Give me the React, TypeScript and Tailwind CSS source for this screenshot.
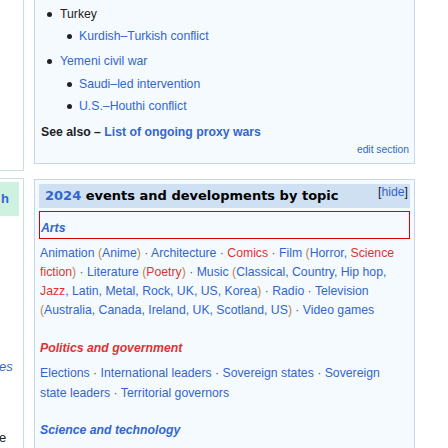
import React from "react";

type Kids = { children: React.ReactNode };

const B = ({ children }: Kids) => <span className="text-[#3366cc]">{children}</span>;
const R = ({ children }: Kids) => <span className="text-[#dd3333]">{children}</span>;
const P = ({ children }: Kids) => <span className="text-[#b5884c]">{children}</span>;
const Dot = () => <span className="text-[#54595d]"> · </span>;

function Item({ level, children }: { level: 1 | 2; children: React.ReactNode }) {
  return (
    <div className={level === 1 ? "flex items-center h-[20px] pl-[12px]" : "flex items-center h-[20px] pl-[32px]"}>
      <span className="w-[5px] h-[5px] rounded-full bg-[#202122] shrink-0" />
      <span className={level === 1 ? "ml-[8px]" : "ml-[7px]"}>{children}</span>
    </div>
  );
}

export default function App() {
  return (
    <div
      className="w-[448px] h-[448px] overflow-hidden bg-white flex text-[12.25px] text-[#202122]"
      style={{ fontFamily: '"Liberation Sans", Arial, sans-serif' }}
    >
      {/* left column, cut off */}
      <div className="w-[24px] shrink-0 flex flex-col">
        <div className="h-[171px] border-r border-b border-[#c8e0dc]" />
        <div className="mt-[7px] flex-1 border-t border-r border-[#c8e0dc] pt-[3px]">
          <div className="w-[19px] h-[34px] bg-[#cff1e0] flex items-center font-bold text-[#3366cc] text-[13px]">
            <span className="ml-[1px]">h</span>
          </div>
          <div className="mt-[141px] leading-[20px] italic text-[#3366cc] text-[13px] -ml-[1px]">es</div>
          <div className="mt-[51px] leading-[20px] text-[13px] -ml-[1px]">e</div>
        </div>
      </div>

      {/* main column */}
      <div className="ml-[10px] w-[381px] shrink-0 flex flex-col">
        <div className="h-[164px] border-l border-r border-b border-[#c5d7ec] bg-[#f5faff] pt-[4px]">
          <Item level={1}>Turkey</Item>
          <div className="mt-[2px]">
            <Item level={2}><B>Kurdish–Turkish conflict</B></Item>
          </div>
          <div className="mt-[5px]">
            <Item level={1}><B>Yemeni civil war</B></Item>
          </div>
          <div className="mt-[3px]">
            <Item level={2}><B>Saudi–led intervention</B></Item>
          </div>
          <div className="mt-[2px]">
            <Item level={2}><B>U.S.–Houthi conflict</B></Item>
          </div>
          <div className="mt-[6px] pl-[6px] leading-[20px] font-bold">
            See also – <B>List of ongoing proxy wars</B>
          </div>
          <div className="mt-[2px] pr-[5px] text-right text-[10.3px] leading-[12px] text-[#3366cc]">edit section</div>
        </div>

        <div className="mt-[15px] flex-1 border-t border-l border-r border-[#c5d7ec] bg-[#f5faff] px-[4px] pt-[4px]">
          <div className="h-[24px] bg-[#cee0f2] flex justify-between pl-[6px] pr-[2px]">
            <div
              className="font-bold text-[13px] leading-[24px] text-[#000]"
              style={{ fontFamily: '"DejaVu Sans", Verdana, sans-serif' }}
            >
              <span className="text-[#3366cc]">2024</span> events and developments by topic
            </div>
            <div className="text-[12.25px] leading-[16px]">
              [<B>hide</B>]
            </div>
          </div>

          <div className="mt-[3px] h-[28px] border border-[#dd0000] pl-[1px] pt-[6px] leading-[20px] italic font-bold text-[#3366cc]">
            Arts
          </div>

          <div className="mt-[5px] pl-[1px] leading-[19px]">
            <div>
              <B>Animation</B> <P>(</P><B>Anime</B><P>)</P><Dot /><B>Architecture</B><Dot /><R>Comics</R><Dot />
              <B>Film</B> <P>(</P><B>Horror, </B><R>Science</R>
            </div>
            <div>
              <R>fiction</R><P>)</P><Dot /><B>Literature</B> <P>(</P><R>Poetry</R><P>)</P><Dot /><B>Music</B>{" "}
              <P>(</P><B>Classical, Country, Hip hop,</B>
            </div>
            <div>
              <R>Jazz</R><B>, Latin, Metal, Rock, UK, US, Korea</B><P>)</P><Dot /><B>Radio</B><Dot /><B>Television</B>
            </div>
            <div>
              <P>(</P><B>Australia, Canada, Ireland, UK, Scotland, US</B><P>)</P><Dot /><B>Video games</B>
            </div>
          </div>

          <div className="mt-[18px] pl-[1px] leading-[20px] italic font-bold text-[#dd3333]">Politics and government</div>
          <div className="mt-[5px] pl-[1px] leading-[20px]">
            <div>
              <B>Elections</B><Dot /><B>International leaders</B><Dot /><B>Sovereign states</B><Dot /><B>Sovereign</B>
            </div>
            <div>
              <B>state leaders</B><Dot /><B>Territorial governors</B>
            </div>
          </div>

          <div className="mt-[17px] pl-[1px] leading-[20px] italic font-bold text-[#3366cc]">Science and technology</div>
        </div>
      </div>
    </div>
  );
}
